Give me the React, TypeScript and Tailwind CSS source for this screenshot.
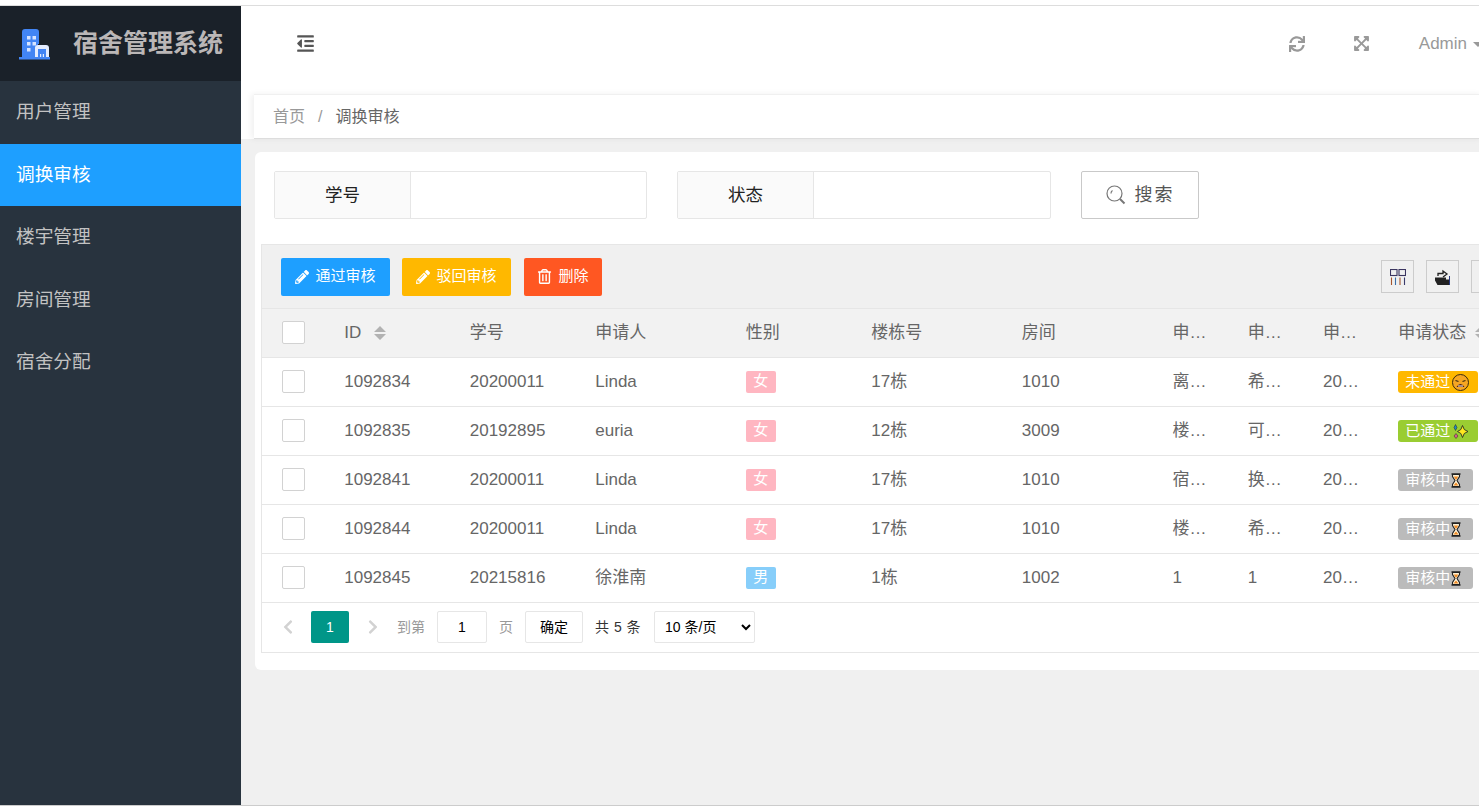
import { FaSync, FaExpandArrowsAlt, FaOutdent, FaPencilAlt, FaRegTrashAlt, FaChevronLeft, FaChevronRight } from "react-icons/fa";

const menu = ["用户管理", "调换审核", "楼宇管理", "房间管理", "宿舍分配"];

type Row = {
  id: string;
  no: string;
  name: string;
  sex: string;
  building: string;
  room: string;
  reason: string;
  wish: string;
  date: string;
  status: "no" | "yes" | "wait";
};

const rows: Row[] = [
  { id: "1092834", no: "20200011", name: "Linda", sex: "女", building: "17栋", room: "1010", reason: "离教室太远了", wish: "希望换到一楼", date: "2021-05-05", status: "no" },
  { id: "1092835", no: "20192895", name: "euria", sex: "女", building: "12栋", room: "3009", reason: "楼层太高了呀", wish: "可以的话换低", date: "2021-05-06", status: "yes" },
  { id: "1092841", no: "20200011", name: "Linda", sex: "女", building: "17栋", room: "1010", reason: "宿舍太吵闹了", wish: "换个安静的", date: "2021-05-08", status: "wait" },
  { id: "1092844", no: "20200011", name: "Linda", sex: "女", building: "17栋", room: "1010", reason: "楼下太吵闹了", wish: "希望换到高层", date: "2021-05-09", status: "wait" },
  { id: "1092845", no: "20215816", name: "徐淮南", sex: "男", building: "1栋", room: "1002", reason: "1", wish: "1", date: "2021-05-10", status: "wait" },
];

function Logo() {
  return (
    <svg viewBox="0 0 32 32" className="w-[32px] h-[32px] shrink-0">
      <path d="M4 29V4q0-3 3-3h11q3 0 3 3v12h-1v13z" fill="#4285f4" />
      <rect x="1" y="29" width="31" height="2.5" fill="#4285f4" />
      <rect x="9" y="8" width="3.5" height="3.5" fill="#d6e4ff" />
      <rect x="14.5" y="8" width="3.5" height="3.5" fill="#d6e4ff" />
      <rect x="9" y="14" width="3.5" height="3.5" fill="#d6e4ff" />
      <rect x="14.5" y="14" width="3.5" height="3.5" fill="#d6e4ff" />
      <rect x="9" y="20" width="3.5" height="3.5" fill="#d6e4ff" />
      <path d="M17 29V20q0-3 3-3h8q3 0 3 3v9z" fill="#e4edff" />
      <path d="M20 29V21h8v8h-2v-3h-1.200v3h-1.600v-3H22v3z" fill="#4285f4" />
    </svg>
  );
}

function SortIcon({ className }: { className: string }) {
  return (
    <svg viewBox="0 0 12 14" className={className}>
      <path d="M6 0l6 6H0zM6 14l6-6H0z" fill="#b2b2b2" />
    </svg>
  );
}

function SearchIcon() {
  return (
    <svg viewBox="0 0 20 20" className="w-[20px] h-[20px]" fill="none" stroke="#777" strokeWidth="1.200">
      <circle cx="8.500" cy="8.500" r="7.500" />
      <path d="M5 8.500a3.500 3.500 0 0 1 1.500-3" />
      <path d="M14 14l4.500 4.500" strokeWidth="2" />
    </svg>
  );
}

function ColsIcon() {
  return (
    <svg viewBox="0 0 16 16" className="w-[16px] h-[16px]" fill="none" strokeWidth="1.100">
      <rect x="0.500" y="0.500" width="6.500" height="6" stroke="#3b3560" />
      <rect x="9" y="0.500" width="6.500" height="6" stroke="#3b3560" />
      <path d="M1.500 8.500V16" stroke="#a5562f" />
      <path d="M5.500 8.500V16" stroke="#3a6ea5" />
      <path d="M10 8.500V16" stroke="#a5562f" />
      <path d="M14.500 8.500V16" stroke="#3a3a6a" />
    </svg>
  );
}

function ExportIcon() {
  return (
    <svg viewBox="0 0 16 16" className="w-[16px] h-[16px]">
      <path d="M0 8.500h11v2h4V16H2.500L0 11.500z" fill="#222" />
      <path d="M3 7V4.500h5V2l4 3-4 3" fill="none" stroke="#222" strokeWidth="1.300" />
      <path d="M14.500 7v9" stroke="#2a3a80" strokeWidth="1" />
    </svg>
  );
}

function TiredFace() {
  return (
    <svg viewBox="0 0 17 17" className="w-[17px] h-[17px] shrink-0">
      <circle cx="8.500" cy="8.500" r="8" fill="#f5a623" stroke="#3a2a10" strokeWidth="1" />
      <path d="M3.500 6.500l3 1M13.500 6.500l-3 1" stroke="#3a2a10" strokeWidth="1.300" />
      <path d="M4.500 13q4-6 8 0z" fill="#4a1a10" />
      <path d="M6 12h5" stroke="#fff" strokeWidth="1" />
    </svg>
  );
}

function Sparkles() {
  return (
    <svg viewBox="0 0 17 17" className="w-[17px] h-[17px] shrink-0">
      <path d="M10.500 2.500q.8 5 5.500 6-4.700 1-5.500 6-.8-5-5-6 4.200-1 5-6z" fill="#ffe81f" stroke="#222" strokeWidth="0.800" />
      <path d="M3.500 1.500l1.500 3-1.500 3-1.500-3z" fill="#1e88c7" stroke="#222" strokeWidth="0.500" />
      <path d="M4 10.500l2 2.500-2 2.500-2-2.500z" fill="#d0608a" stroke="#222" strokeWidth="0.500" />
    </svg>
  );
}

function Hourglass() {
  return (
    <svg viewBox="0 0 10 15" className="w-[10px] h-[15px] shrink-0 ml-[1px]">
      <path d="M1.500 1.500h7v2L6 7.500l2.500 4v2h-7v-2l2.500-4-2.500-4z" fill="#fff3d6" stroke="#222" strokeWidth="1.100" />
      <path d="M2.700 3.500h4.600L5 7zM5 9.500l2.500 3h-5z" fill="#f08a24" />
      <path d="M0.500 1h9M0.500 14h9" stroke="#222" strokeWidth="1.400" />
    </svg>
  );
}

function StatusTag({ status }: { status: Row["status"] }) {
  if (status === "no") {
    return (
      <span className="inline-flex items-center h-[22px] w-[80px] pl-[7px] rounded-[3px] bg-[#ffb800] text-white text-[15px]">
        未通过<span className="ml-[2px]"><TiredFace /></span>
      </span>
    );
  }
  if (status === "yes") {
    return (
      <span className="inline-flex items-center h-[22px] w-[80px] pl-[7px] rounded-[3px] bg-[#9acd32] text-white text-[15px]">
        已通过<span className="ml-[2px]"><Sparkles /></span>
      </span>
    );
  }
  return (
    <span className="inline-flex items-center h-[22px] w-[75px] pl-[7px] rounded-[3px] bg-[#bbbbbb] text-white text-[15px]">
      审核中<Hourglass />
    </span>
  );
}

function Checkbox() {
  return <div className="w-[23px] h-[23px] ml-[20px] bg-white border border-[#d2d2d2] rounded-[2px]" />;
}

export default function App() {
  return (
    <div className="flex flex-col w-full h-screen overflow-hidden bg-white font-['Liberation_Sans','Noto_Sans_CJK_SC',sans-serif]">
      <div className="h-[6px] shrink-0 bg-white border-b border-[#dddddd]" />

      <div className="flex flex-1 min-h-0">
        {/* sidebar */}
        <aside className="w-[241px] shrink-0 bg-[#28333e]">
          <div className="flex items-center h-[75px] pl-[18px] bg-[#1a2129]">
            <Logo />
            <span className="ml-[23px] text-[25px] font-bold text-[#bbb7b7] whitespace-nowrap">宿舍管理系统</span>
          </div>
          {menu.map((m) => (
            <div
              key={m}
              className={
                m === "调换审核"
                  ? "flex items-center h-[62.500px] pl-[16px] text-[18.700px] bg-[#1e9fff] text-white"
                  : "flex items-center h-[62.500px] pl-[16px] text-[18.700px] text-[#c2c2c2]"
              }
            >
              {m}
            </div>
          ))}
        </aside>

        {/* main */}
        <main className="flex-1 min-w-0 overflow-hidden bg-[#f0f0f0]">
          <div className="bg-white w-[1242px] h-[133px]">
            <div className="flex items-center h-[75px] pl-[55px]">
              <FaOutdent className="w-[19px] h-[19px] text-[#555555]" />
              <FaSync className="ml-auto w-[16px] h-[16px] text-[#999999]" />
              <FaExpandArrowsAlt className="ml-[48px] w-[17px] h-[17px] text-[#999999]" />
              <span className="ml-[49px] text-[17px] text-[#999999]">Admin</span>
              <span className="ml-[6px] mt-[2px] border-x-[5px] border-x-transparent border-t-[5px] border-t-[#999999]" />
            </div>
            <div className="flex items-center h-[45px] mt-[13px] ml-[13px] pl-[19px] border-y border-t-[#f0f0f0] border-b-[#dddddd] shadow-[-3px_0_6px_rgba(0,0,0,0.06)] text-[16px]">
              <span className="text-[#999999]">首页</span>
              <span className="mx-[13px] text-[#999999]">/</span>
              <span className="text-[#666666]">调换审核</span>
            </div>
          </div>

          <section className="w-[1300px] h-[518px] mt-[13px] ml-[14px] pt-[19px] bg-white rounded-[6px]">
            {/* search */}
            <div className="flex items-stretch h-[48px] ml-[19px]">
              <div className="flex w-[373px] border border-[#e6e6e6] rounded-[2px]">
                <div className="flex items-center justify-center w-[136px] bg-[#fafafa] border-r border-[#e6e6e6] text-[17.500px] text-[#222222]">学号</div>
              </div>
              <div className="flex w-[374px] ml-[30px] border border-[#e6e6e6] rounded-[2px]">
                <div className="flex items-center justify-center w-[136px] bg-[#fafafa] border-r border-[#e6e6e6] text-[17.500px] text-[#222222]">状态</div>
              </div>
              <button className="flex items-center justify-center gap-[9px] w-[118px] ml-[30px] border border-[#c9c9c9] rounded-[2px] text-[18px] tracking-[2px] text-[#555555]">
                <SearchIcon />
                搜索
              </button>
            </div>

            {/* table */}
            <div className="mt-[25px] ml-[6px] border border-[#e6e6e6]">
              <div className="flex items-center h-[64px] pl-[19px] bg-[#f0f0f0] border-b border-[#e6e6e6]">
                <button className="flex items-center justify-center gap-[6px] w-[109px] h-[38px] rounded-[2px] bg-[#1e9fff] text-white text-[15px]">
                  <FaPencilAlt className="w-[14px] h-[14px]" />
                  通过审核
                </button>
                <button className="flex items-center justify-center gap-[6px] w-[109px] h-[38px] ml-[12px] rounded-[2px] bg-[#ffb800] text-white text-[15px]">
                  <FaPencilAlt className="w-[14px] h-[14px]" />
                  驳回审核
                </button>
                <button className="flex items-center justify-center gap-[6px] w-[78px] h-[38px] ml-[13px] rounded-[2px] bg-[#ff5722] text-white text-[15px]">
                  <FaRegTrashAlt className="w-[15px] h-[15px]" />
                  删除
                </button>
                <div className="flex items-center justify-center w-[33px] h-[33px] ml-[779px] border border-[#cccccc]">
                  <ColsIcon />
                </div>
                <div className="flex items-center justify-center w-[33px] h-[33px] ml-[12px] border border-[#cccccc]">
                  <ExportIcon />
                </div>
                <div className="w-[33px] h-[33px] ml-[12px] border border-[#cccccc]" />
              </div>

              <table className="table-fixed w-[1272px] border-collapse text-[17px] text-[#666666]">
                <thead>
                  <tr className="h-[48px] bg-[#f2f2f2] border-b border-[#e6e6e6] text-left">
                    <th className="w-[67px] p-0 font-normal"><Checkbox /></th>
                    <th className="w-[125px] px-[15px] py-0 font-normal">
                      <span className="inline-flex items-center">ID<SortIcon className="w-[12px] h-[14px] ml-[13px]" /></span>
                    </th>
                    <th className="w-[125px] px-[15px] py-0 font-normal">学号</th>
                    <th className="w-[150px] px-[15px] py-0 font-normal">申请人</th>
                    <th className="w-[125px] px-[15px] py-0 font-normal">性别</th>
                    <th className="w-[150px] px-[15px] py-0 font-normal">楼栋号</th>
                    <th className="w-[150px] px-[15px] py-0 font-normal">房间</th>
                    <th className="w-[75px] px-[15px] py-0 font-normal truncate">申请原因</th>
                    <th className="w-[75px] px-[15px] py-0 font-normal truncate">申请意向</th>
                    <th className="w-[75px] px-[15px] py-0 font-normal truncate">申请时间</th>
                    <th className="w-[150px] pl-[15px] py-0 font-normal whitespace-nowrap">
                      <span className="inline-flex items-center">申请状态<SortIcon className="w-[12px] h-[14px] ml-[9px]" /></span>
                    </th>
                  </tr>
                </thead>
                <tbody>
                  {rows.map((r) => (
                    <tr key={r.id} className="h-[49px] border-b border-[#e6e6e6]">
                      <td className="p-0"><Checkbox /></td>
                      <td className="px-[15px] py-0">{r.id}</td>
                      <td className="px-[15px] py-0">{r.no}</td>
                      <td className="px-[15px] py-0">{r.name}</td>
                      <td className="px-[15px] py-0">
                        <span className={r.sex === "女" ? "flex items-center justify-center w-[30px] h-[22px] rounded-[2px] bg-[#ffb6c1] text-white text-[15px]" : "flex items-center justify-center w-[30px] h-[22px] rounded-[2px] bg-[#87cefa] text-white text-[15px]"}>
                          {r.sex}
                        </span>
                      </td>
                      <td className="px-[15px] py-0">{r.building}</td>
                      <td className="px-[15px] py-0">{r.room}</td>
                      <td className="px-[15px] py-0 truncate">{r.reason}</td>
                      <td className="px-[15px] py-0 truncate">{r.wish}</td>
                      <td className="px-[15px] py-0 truncate">{r.date}</td>
                      <td className="pl-[15px] py-0"><StatusTag status={r.status} /></td>
                    </tr>
                  ))}
                </tbody>
              </table>

              {/* pager */}
              <div className="flex items-center h-[49px] pl-[20px] text-[14px] text-[#333333]">
                <FaChevronLeft className="w-[12px] h-[16px] text-[#d2d2d2]" />
                <span className="flex items-center justify-center w-[38px] h-[32px] ml-[17px] rounded-[2px] bg-[#009688] text-white">1</span>
                <FaChevronRight className="w-[12px] h-[16px] ml-[18px] text-[#d2d2d2]" />
                <span className="ml-[18px] text-[#999999]">到第</span>
                <span className="flex items-center justify-center w-[50px] h-[32px] ml-[12px] bg-white border border-[#e6e6e6] rounded-[2px] text-black">1</span>
                <span className="ml-[12px] text-[#999999]">页</span>
                <span className="flex items-center justify-center w-[58px] h-[32px] ml-[12px] bg-white border border-[#e6e6e6] rounded-[2px] text-black">确定</span>
                <span className="ml-[12px] tracking-[0.500px]">共 5 条</span>
                <select defaultValue="10" className="w-[101px] h-[32px] ml-[13px] pl-[6px] bg-white border border-[#e6e6e6] rounded-[2px] text-[14px] text-black">
                  <option value="10">10 条/页</option>
                  <option value="20">20 条/页</option>
                </select>
              </div>
            </div>
          </section>
        </main>
      </div>

      <div className="h-px shrink-0 bg-[#cccccc]" />
    </div>
  );
}
